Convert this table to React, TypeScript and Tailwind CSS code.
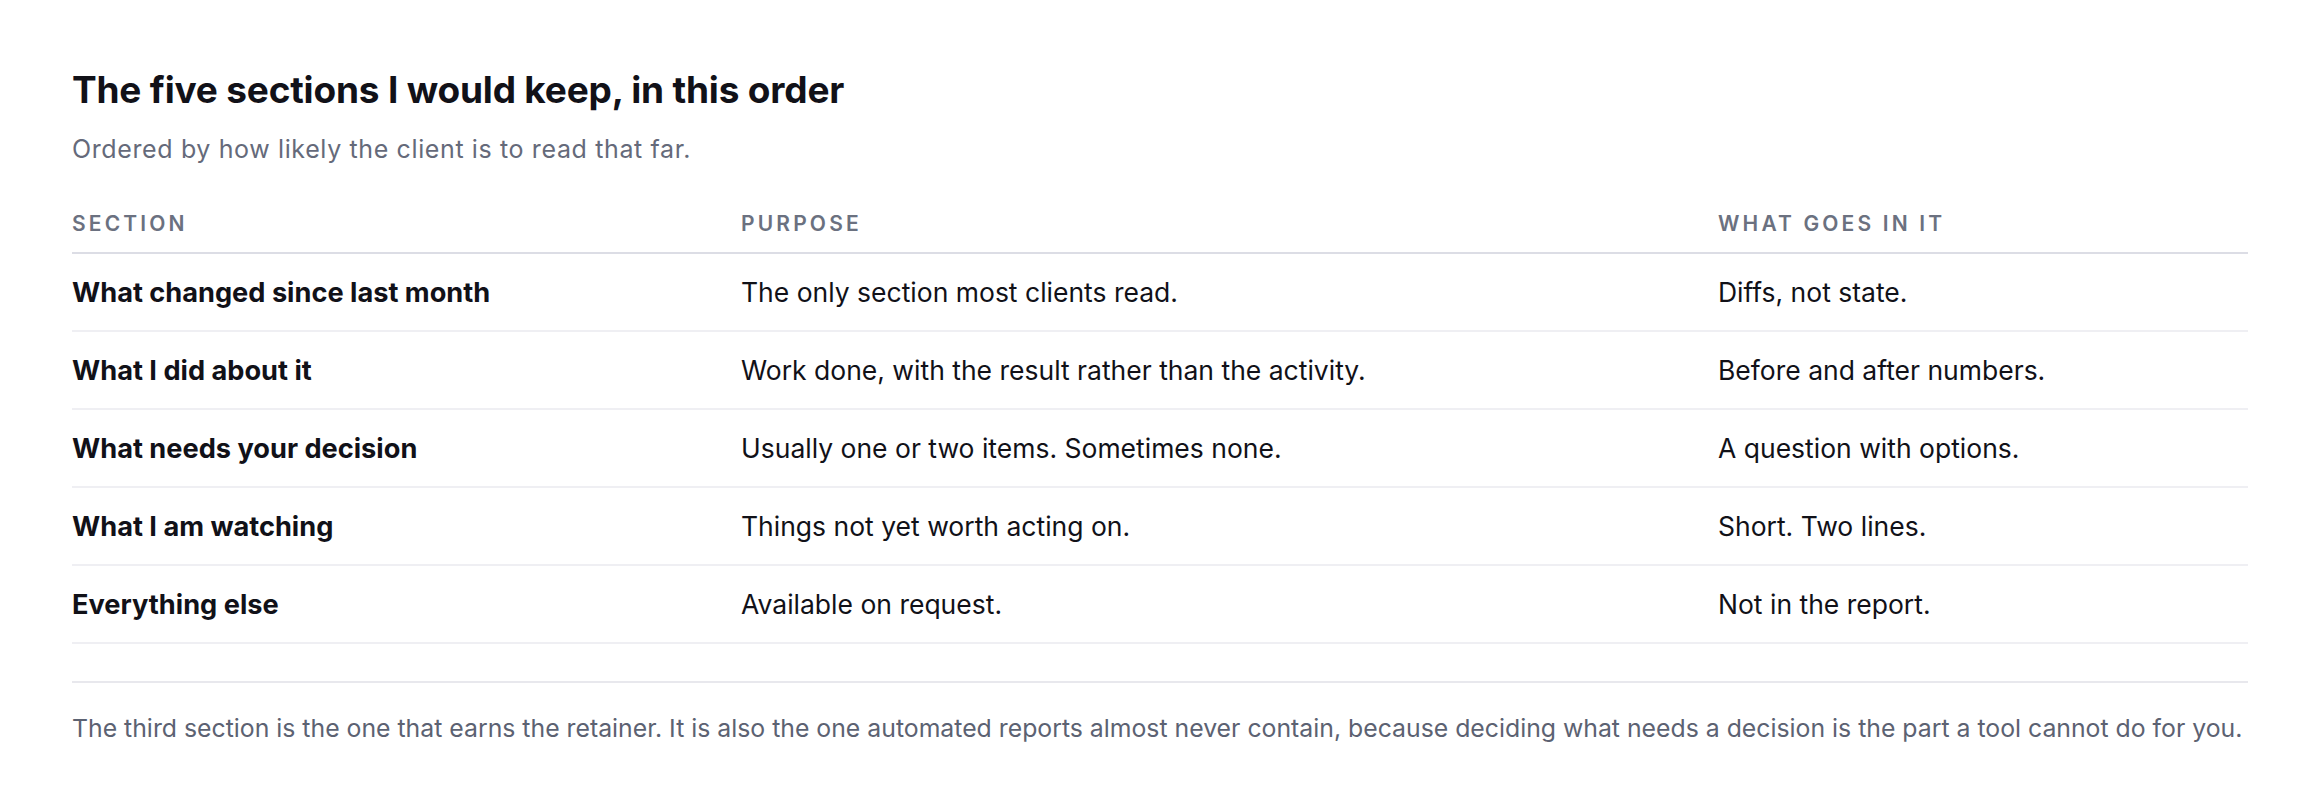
import React from 'react';

interface Row {
  section: string;
  purpose: string;
  contents: string;
}

const rows: Row[] = [
  { section: 'What changed since last month', purpose: 'The only section most clients read.', contents: 'Diffs, not state.' },
  { section: 'What I did about it', purpose: 'Work done, with the result rather than the activity.', contents: 'Before and after numbers.' },
  { section: 'What needs your decision', purpose: 'Usually one or two items. Sometimes none.', contents: 'A question with options.' },
  { section: 'What I am watching', purpose: 'Things not yet worth acting on.', contents: 'Short. Two lines.' },
  { section: 'Everything else', purpose: 'Available on request.', contents: 'Not in the report.' },
];

const App: React.FC = () => {
  return (
    <div className="min-h-screen bg-white px-[72px] pt-[68px] font-['Inter','Liberation_Sans',sans-serif] text-[#111118]">
      {/* Heading */}
      <h1 className="text-[37px] leading-[44px] font-bold tracking-[-0.005em]">The five sections I would keep, in this order</h1>
      <p className="mt-[21px] text-[25px] leading-[32px] tracking-[0.025em] text-[#656a7a]">Ordered by how likely the client is to read that far.</p>

      {/* Table */}
      <div className="mt-[43px]">
        <div className="grid grid-cols-[669px_977px_1fr] border-b-2 border-[#dcdde5] pb-[12px] text-[21px] leading-[32px] font-semibold uppercase tracking-[0.15em] text-[#6b7180]">
          <div>Section</div>
          <div>Purpose</div>
          <div>What goes in it</div>
        </div>
        {rows.map((row) => (
          <div key={row.section} className="grid grid-cols-[669px_977px_1fr] border-b-2 border-[#efeff3] pt-[19px] pb-[18px] text-[26.5px] leading-[39px]">
            <div className="text-[27.2px] font-bold">{row.section}</div>
            <div>{row.purpose}</div>
            <div>{row.contents}</div>
          </div>
        ))}
      </div>

      {/* Footnote */}
      <p className="mt-[37px] border-t-2 border-[#e8e8ed] pt-[27px] text-[24.8px] leading-[36px] text-[#5c6272] whitespace-nowrap">
        The third section is the one that earns the retainer. It is also the one automated reports almost never contain, because deciding what needs a decision is the part a tool cannot do for you.
      </p>
    </div>
  );
};

export default App;
